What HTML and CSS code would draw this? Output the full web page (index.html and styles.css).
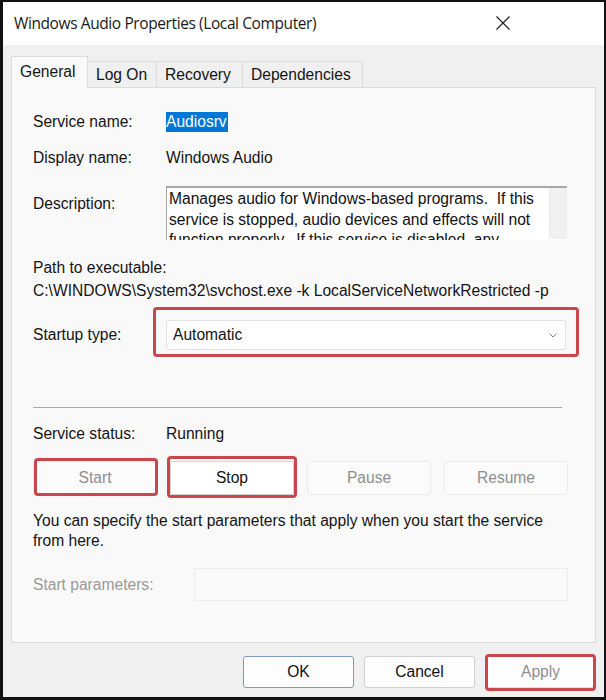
FILE: index.html
```html
<!DOCTYPE html>
<html>
<head>
<meta charset="utf-8">
<link rel="stylesheet" href="styles.css">
</head>
<body>
<div class="window">
  <div class="titlebar">
    <span class="title">Windows Audio Properties (Local Computer)</span>
    <svg class="close" width="14" height="14" viewBox="0 0 14 14"><path d="M0.5 0.5 L13.5 13.5 M13.5 0.5 L0.5 13.5" stroke="#1a1a1a" stroke-width="1.1" fill="none"/></svg>
  </div>
  <div class="body">
    <div class="tabs">
      <div class="tab active">General</div>
      <div class="tab">Log On</div>
      <div class="tab">Recovery</div>
      <div class="tab">Dependencies</div>
    </div>
    <div class="panel">
      <div class="row r-name">
        <span class="label">Service name:</span>
        <span class="value"><span class="sel">Audiosrv</span></span>
      </div>
      <div class="row r-display">
        <span class="label">Display name:</span>
        <span class="value">Windows Audio</span>
      </div>
      <div class="row r-desc">
        <span class="label desc-label">Description:</span>
        <div class="descbox">
          <div class="desctext">Manages audio for Windows-based programs.&nbsp; If this service is stopped, audio devices and effects will not function properly.&nbsp; If this service is disabled, any services that explicitly depend on it will fail to start</div>
          <div class="scroll"></div>
        </div>
      </div>
      <div class="path-label">Path to executable:</div>
      <div class="path-value">C:\WINDOWS\System32\svchost.exe -k LocalServiceNetworkRestricted -p</div>
      <div class="row r-startup">
        <span class="label">Startup type:</span>
        <div class="combo hl hl-combo">
          <span>Automatic</span>
          <svg class="chev" width="8" height="5" viewBox="0 0 8 5"><path d="M0.5 0.5 L4 4 L7.5 0.5" stroke="#8a8a8a" stroke-width="1" fill="none"/></svg>
        </div>
      </div>
      <div class="sep"></div>
      <div class="row r-status">
        <span class="label">Service status:</span>
        <span class="value">Running</span>
      </div>
      <div class="btnrow">
        <div class="btn disabled hl hl-start">Start</div>
        <div class="btn hl hl-stop">Stop</div>
        <div class="btn disabled">Pause</div>
        <div class="btn disabled">Resume</div>
      </div>
      <p class="note">You can specify the start parameters that apply when you start the service from here.</p>
      <div class="row r-params">
        <span class="label dim">Start parameters:</span>
        <div class="parambox"></div>
      </div>
    </div>
    <div class="footer">
      <div class="fbtn ok">OK</div>
      <div class="fbtn">Cancel</div>
      <div class="fbtn disabled hl hl-apply">Apply</div>
    </div>
  </div>
</div>
</body>
</html>
```

FILE: styles.css
```css
html, body {
  margin: 0;
  padding: 0;
  background: #111;
}
.window {
  width: 606px;
  height: 700px;
  box-sizing: border-box;
  border-top: 2px solid #111;
  border-left: 3px solid #111;
  border-right: 2px solid #111;
  border-bottom: 3px solid #111;
  display: flex;
  flex-direction: column;
  background: #f0f0f0;
  overflow: hidden;
}
.titlebar {
  height: 43px;
  flex: none;
  background: #ffffff;
  display: flex;
  align-items: center;
  justify-content: space-between;
  padding: 0 94px 0 11px;
  box-sizing: border-box;
}
.title {
  font-family: "Open Sans", "Noto Sans", sans-serif;
  font-size: 15.5px;
  color: #1a1a1a;
  letter-spacing: -0.4px;
  position: relative;
  top: -1px;
}
.close {
  position: relative;
  top: -1px;
}
.body {
  flex: 1;
  display: flex;
  flex-direction: column;
  padding: 12px 0 0 8px;
  font-family: "Liberation Sans", Arial, sans-serif;
  font-size: 15.6px;
  color: #141414;
}
.tabs {
  display: flex;
  align-items: flex-end;
  height: 30px;
  position: relative;
  z-index: 1;
}
.tab {
  height: 26px;
  box-sizing: border-box;
  padding: 0 8px;
  display: flex;
  align-items: center;
  border: 1px solid #dcdcdc;
  border-bottom: none;
  border-left: none;
  background: #f0f0f0;
  color: #141414;
}
.tab.active {
  height: 32px;
  margin-bottom: -1px;
  background: #f9f9f9;
  border-left: 1px solid #dcdcdc;
  padding: 0 8px 2px 8px;
  width: 77px;
}
.tab:nth-child(2) { width: 69px; }
.tab:nth-child(3) { width: 86px; }
.tab:nth-child(4) { width: 120px; }
.panel {
  width: 585px;
  height: 556px;
  box-sizing: border-box;
  background: #f9f9f9;
  border: 1px solid #dcdcdc;
  padding: 0 0 0 21px;
  display: flex;
  flex-direction: column;
}
.row {
  display: flex;
  align-items: center;
}
.label {
  width: 133px;
  flex: none;
  line-height: 20px;
}
.value {
  line-height: 20px;
}
.r-name { margin-top: 24px; }
.sel {
  background: #0078d7;
  color: #ffffff;
  padding: 0 1px 0 0;
  display: inline-block;
  line-height: 20px;
}
.r-display { margin-top: 16px; }
.r-desc {
  margin-top: 18px;
  align-items: flex-start;
}
.desc-label { margin-top: 8px; }
.descbox {
  width: 401px;
  height: 54px;
  box-sizing: border-box;
  background: #ffffff;
  border-top: 2px solid #a8a8a8;
  border-left: 1px solid #a8a8a8;
  display: flex;
  overflow: hidden;
}
.desctext {
  flex: 1;
  padding: 1px 0 0 2px;
  line-height: 20.5px;
  color: #111;
}
.scroll {
  width: 18px;
  flex: none;
  background: #f0f0f0;
  border-bottom: 1px solid #ffffff;
}
.path-label {
  margin-top: 18px;
  line-height: 20px;
}
.path-value {
  margin-top: 3px;
  line-height: 20px;
}
.r-startup { margin-top: 19px; }
.combo {
  width: 400px;
  height: 30px;
  box-sizing: border-box;
  background: #ffffff;
  border: 1px solid #e2e2e2;
  border-radius: 2px;
  display: flex;
  align-items: center;
  justify-content: space-between;
  padding: 0 8px 0 6px;
}
.hl { position: relative; }
.hl::after {
  content: "";
  position: absolute;
  border: 3px solid #c9474c;
  border-radius: 4px;
  pointer-events: none;
}
.hl-combo::after { left: -14px; right: -14px; top: -14px; bottom: -8px; }
.sep {
  margin-top: 57px;
  width: 529px;
  height: 1px;
  background: #a8a8a8;
}
.r-status { margin-top: 16px; }
.btnrow {
  margin-top: 17px;
  display: grid;
  grid-template-columns: repeat(4, 124px);
  column-gap: 13px;
}
.btn {
  height: 34px;
  box-sizing: border-box;
  display: flex;
  align-items: center;
  justify-content: center;
  background: #ffffff;
  border: 1px solid #d4d4d4;
  border-radius: 3px;
  color: #111;
}
.btn.disabled {
  background: #fbfbfb;
  border-color: #ececec;
  color: #8f8f8f;
}
.hl-start::after { left: 0px; right: -2px; top: -4px; bottom: -2px; }
.hl-stop::after { left: -4px; right: -4px; top: -6px; bottom: -4px; }
.note {
  margin: 16px 0 0 0;
  line-height: 20px;
  width: 540px;
}
.r-params { margin-top: 17px; }
.dim { color: #9a9a9a; width: 161px; }
.parambox {
  width: 374px;
  height: 33px;
  box-sizing: border-box;
  border: 1px solid #ececec;
  background: #f9f9f9;
}
.footer {
  margin-top: 13px;
  width: 585px;
  display: flex;
  justify-content: flex-end;
  gap: 10px;
}
.fbtn {
  width: 111px;
  height: 32px;
  box-sizing: border-box;
  display: flex;
  align-items: center;
  justify-content: center;
  background: #fdfdfd;
  border: 1px solid #d0d0d0;
  border-radius: 3px;
  color: #111;
}
.fbtn.ok { border-color: #7a9cc0; }
.fbtn.disabled { color: #8f8f8f; border-color: #e0e0e0; }
.hl-apply::after { left: -1px; right: -1px; top: -3px; bottom: -4px; }
```
